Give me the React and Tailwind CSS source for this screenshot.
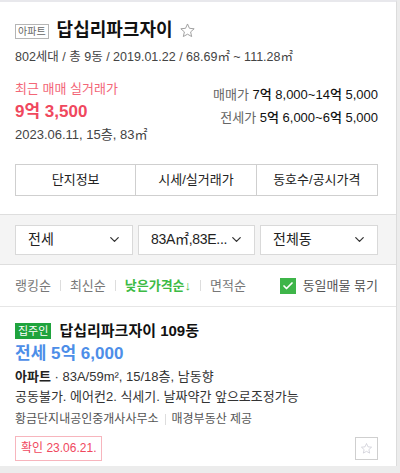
import { ChevronDown, Check } from "lucide-react";

const font = { fontFamily: '"Liberation Sans", "Noto Sans CJK KR", sans-serif' };

function Select({ label, className = "" }) {
  return (
    <div
      className={`flex items-center justify-between h-[30px] bg-white border border-[#d9d9d9] pl-[12px] pr-[10px] text-[14px] text-[#222] ${className}`}
    >
      <span className="whitespace-nowrap overflow-hidden">{label}</span>
      <ChevronDown size={15} strokeWidth={2} className="text-[#333] shrink-0" />
    </div>
  );
}

function Star({ size = 18, color = "#999" }) {
  return (
    <svg width={size} height={size} viewBox="0 0 24 24" fill="none" stroke={color} strokeWidth="1.3" strokeLinejoin="round">
      <path d="M12 2.8l2.75 6.1 6.65.65-5 4.45 1.45 6.55L12 17.2l-5.85 3.35 1.45-6.55-5-4.45 6.65-.65z" />
    </svg>
  );
}

export default function App() {
  return (
    <div className="w-[400px] h-[473px] bg-[#ececec] overflow-hidden" style={font}>
      <div className="w-[397px] h-[466px] bg-white border-r border-[#dcdcdc] border-t-2 border-t-[#e8e8ec]">
        {/* Header */}
        <div className="px-[15px] pt-[15px]">
          <div className="flex items-center">
            <span className="border border-[#b5b5b5] text-[10px] text-[#666] px-[2px] h-[15px] leading-[13px] mt-[2px]">
              아파트
            </span>
            <h1 className="ml-[8px] text-[18px] font-bold text-[#111] leading-[26px]">답십리파크자이</h1>
            <span className="ml-[6px] mt-[1px]">
              <Star size={17} color="#9a9a9a" />
            </span>
          </div>
          <p className="mt-[5px] text-[12.5px] text-[#444] leading-[18px]">
            802세대 / 총 9동 / 2019.01.22 / 68.69㎡ ~ 111.28㎡
          </p>

          <div className="flex justify-between mt-[14px]">
            <div>
              <p className="text-[13px] text-[#f36677] leading-[18px]">최근 매매 실거래가</p>
              <p className="mt-[3px] text-[17px] font-bold text-[#f0485e] leading-[22px]">9억 3,500</p>
              <p className="mt-[3px] text-[13px] text-[#444] leading-[18px]">2023.06.11, 15층, 83㎡</p>
            </div>
            <div className="text-right text-[13px] leading-[18px] pt-[6px] pr-[3px]">
              <p className="text-[#666]">
                매매가 <span className="text-[#111] font-medium">7억 8,000~14억 5,000</span>
              </p>
              <p className="mt-[5px] text-[#666]">
                전세가 <span className="text-[#111] font-medium">5억 6,000~6억 5,000</span>
              </p>
            </div>
          </div>

          <div className="grid grid-cols-3 mt-[20px] border border-[#cfcfcf] h-[32px] text-[13px] text-[#222] mr-[3px]">
            <div className="flex items-center justify-center border-r border-[#cfcfcf]">단지정보</div>
            <div className="flex items-center justify-center border-r border-[#cfcfcf]">시세/실거래가</div>
            <div className="flex items-center justify-center">동호수/공시가격</div>
          </div>
        </div>

        {/* Filters */}
        <div className="mt-[18px] bg-[#f4f4f4] border-y border-[#dedede] h-[51px] px-[15px] pr-[18px] flex items-center gap-[5px]">
          <Select label="전세" className="w-[118px]" />
          <Select label="83A㎡,83E..." className="w-[117px] text-[13px] tracking-[-0.3px]" />
          <Select label="전체동" className="w-[118px]" />
        </div>

        {/* Sort */}
        <div className="flex items-center justify-between px-[15px] pr-[18px] h-[42px] border-b border-[#e6e6e6] text-[13px]">
          <div className="flex items-center text-[#777]">
            <span>랭킹순</span>
            <span className="mx-[9px] w-px h-[11px] bg-[#ddd]" />
            <span>최신순</span>
            <span className="mx-[9px] w-px h-[11px] bg-[#ddd]" />
            <span className="text-[#3dbb45] font-bold">낮은가격순↓</span>
            <span className="mx-[9px] w-px h-[11px] bg-[#ddd]" />
            <span>면적순</span>
          </div>
          <div className="flex items-center text-[#555]">
            <span className="w-[16px] h-[16px] bg-[#3eb549] flex items-center justify-center">
              <Check size={12} strokeWidth={3.5} className="text-white" />
            </span>
            <span className="ml-[7px]">동일매물 묶기</span>
          </div>
        </div>

        {/* Listing */}
        <div className="px-[15px] pr-[18px] pt-[14px]">
          <div className="flex items-center">
            <span className="bg-[#1fa33d] text-white text-[11px] px-[3px] h-[16px] leading-[16px]">집주인</span>
            <span className="ml-[8px] text-[15px] font-bold text-[#111] leading-[20px]">답십리파크자이 109동</span>
          </div>
          <p className="mt-[2px] text-[17px] font-bold text-[#4d8ee8] leading-[22px]">전세 5억 6,000</p>
          <p className="mt-[2px] text-[13px] text-[#333] leading-[20px]">
            <span className="font-bold text-[#222]">아파트</span> · 83A/59m², 15/18층, 남동향
          </p>
          <p className="text-[13px] text-[#333] leading-[20px]">공동불가. 에어컨2. 식세기. 날짜약간 앞으로조정가능</p>
          <p className="mt-[4px] text-[12px] text-[#555] leading-[16px] flex items-center">
            황금단지내공인중개사사무소
            <span className="mx-[6px] w-px h-[11px] bg-[#ddd]" />
            매경부동산 제공
          </p>
          <div className="flex items-center justify-between mt-[9px]">
            <span className="border border-[#f7b5bd] text-[#f0485e] text-[12px] px-[5px] h-[25px] leading-[23px]">
              확인 23.06.21.
            </span>
            <span className="w-[23px] h-[23px] border border-[#cfcfcf] flex items-center justify-center">
              <Star size={13} color="#c8c8d2" />
            </span>
          </div>
        </div>
      </div>
    </div>
  );
}
